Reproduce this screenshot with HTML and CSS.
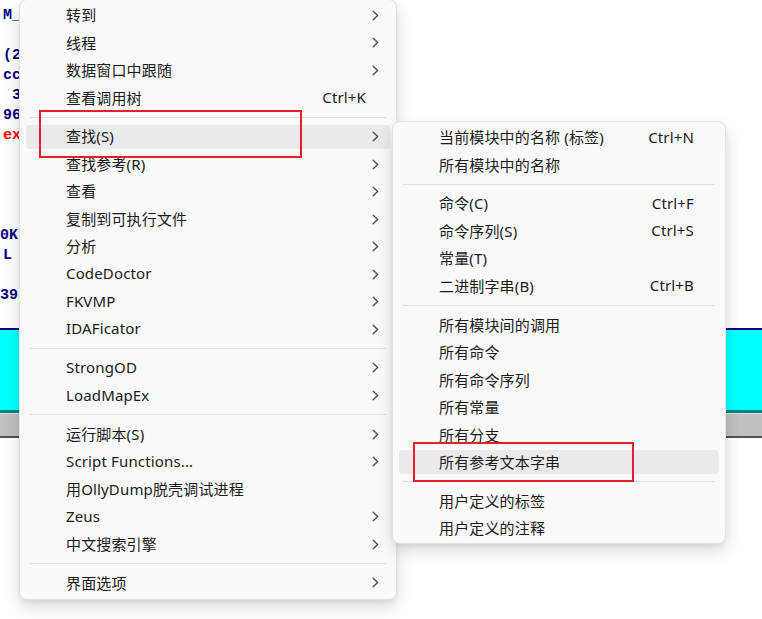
FILE: index.html
```html
<!DOCTYPE html>
<html lang="zh-CN">
<head>
<meta charset="utf-8">
<title>菜单</title>
<link rel="stylesheet" href="styles.css">
</head>
<body>
<div class="desk">
  <div class="code">
    <div class="ln">M_</div>
    <div class="ln"></div>
    <div class="ln">(2</div>
    <div class="ln">cc</div>
    <div class="ln">&nbsp;3</div>
    <div class="ln">96</div>
    <div class="ln red">ex</div>
    <div class="ln"></div>
    <div class="ln"></div>
    <div class="ln"></div>
    <div class="ln"></div>
    <div class="ln shift">0K</div>
    <div class="ln">L</div>
    <div class="ln"></div>
    <div class="ln shift">39</div>
  </div>
  <div class="band">
    <div class="cyan"></div>
    <div class="gray"></div>
  </div>
</div>

<div class="menu main">
  <div class="it"><div class="in"><span class="lb">转到</span><svg class="chev" viewBox="0 0 7 11"><path d="M1.2 1.2 L5.6 5.5 L1.2 9.8"/></svg></div></div>
  <div class="it"><div class="in"><span class="lb">线程</span><svg class="chev" viewBox="0 0 7 11"><path d="M1.2 1.2 L5.6 5.5 L1.2 9.8"/></svg></div></div>
  <div class="it"><div class="in"><span class="lb">数据窗口中跟随</span><svg class="chev" viewBox="0 0 7 11"><path d="M1.2 1.2 L5.6 5.5 L1.2 9.8"/></svg></div></div>
  <div class="it"><div class="in"><span class="lb">查看调用树</span><span class="sc">Ctrl+K</span></div></div>
  <div class="sep"></div>
  <div class="it"><div class="in hl"><span class="lb">查找(S)</span><svg class="chev" viewBox="0 0 7 11"><path d="M1.2 1.2 L5.6 5.5 L1.2 9.8"/></svg></div></div>
  <div class="it"><div class="in"><span class="lb">查找参考(R)</span><svg class="chev" viewBox="0 0 7 11"><path d="M1.2 1.2 L5.6 5.5 L1.2 9.8"/></svg></div></div>
  <div class="it"><div class="in"><span class="lb">查看</span><svg class="chev" viewBox="0 0 7 11"><path d="M1.2 1.2 L5.6 5.5 L1.2 9.8"/></svg></div></div>
  <div class="it"><div class="in"><span class="lb">复制到可执行文件</span><svg class="chev" viewBox="0 0 7 11"><path d="M1.2 1.2 L5.6 5.5 L1.2 9.8"/></svg></div></div>
  <div class="it"><div class="in"><span class="lb">分析</span><svg class="chev" viewBox="0 0 7 11"><path d="M1.2 1.2 L5.6 5.5 L1.2 9.8"/></svg></div></div>
  <div class="it"><div class="in"><span class="lb">CodeDoctor</span><svg class="chev" viewBox="0 0 7 11"><path d="M1.2 1.2 L5.6 5.5 L1.2 9.8"/></svg></div></div>
  <div class="it"><div class="in"><span class="lb">FKVMP</span><svg class="chev" viewBox="0 0 7 11"><path d="M1.2 1.2 L5.6 5.5 L1.2 9.8"/></svg></div></div>
  <div class="it"><div class="in"><span class="lb">IDAFicator</span><svg class="chev" viewBox="0 0 7 11"><path d="M1.2 1.2 L5.6 5.5 L1.2 9.8"/></svg></div></div>
  <div class="sep"></div>
  <div class="it"><div class="in"><span class="lb">StrongOD</span><svg class="chev" viewBox="0 0 7 11"><path d="M1.2 1.2 L5.6 5.5 L1.2 9.8"/></svg></div></div>
  <div class="it"><div class="in"><span class="lb">LoadMapEx</span><svg class="chev" viewBox="0 0 7 11"><path d="M1.2 1.2 L5.6 5.5 L1.2 9.8"/></svg></div></div>
  <div class="sep"></div>
  <div class="it"><div class="in"><span class="lb">运行脚本(S)</span><svg class="chev" viewBox="0 0 7 11"><path d="M1.2 1.2 L5.6 5.5 L1.2 9.8"/></svg></div></div>
  <div class="it"><div class="in"><span class="lb">Script Functions...</span><svg class="chev" viewBox="0 0 7 11"><path d="M1.2 1.2 L5.6 5.5 L1.2 9.8"/></svg></div></div>
  <div class="it"><div class="in"><span class="lb">用OllyDump脱壳调试进程</span></div></div>
  <div class="it"><div class="in"><span class="lb">Zeus</span><svg class="chev" viewBox="0 0 7 11"><path d="M1.2 1.2 L5.6 5.5 L1.2 9.8"/></svg></div></div>
  <div class="it"><div class="in"><span class="lb">中文搜索引擎</span><svg class="chev" viewBox="0 0 7 11"><path d="M1.2 1.2 L5.6 5.5 L1.2 9.8"/></svg></div></div>
  <div class="sep"></div>
  <div class="it"><div class="in"><span class="lb">界面选项</span><svg class="chev" viewBox="0 0 7 11"><path d="M1.2 1.2 L5.6 5.5 L1.2 9.8"/></svg></div></div>
</div>

<div class="menu sub">
  <div class="it"><div class="in"><span class="lb">当前模块中的名称 (标签)</span><span class="sc">Ctrl+N</span></div></div>
  <div class="it"><div class="in"><span class="lb">所有模块中的名称</span></div></div>
  <div class="sep"></div>
  <div class="it"><div class="in"><span class="lb">命令(C)</span><span class="sc">Ctrl+F</span></div></div>
  <div class="it"><div class="in"><span class="lb">命令序列(S)</span><span class="sc">Ctrl+S</span></div></div>
  <div class="it"><div class="in"><span class="lb">常量(T)</span></div></div>
  <div class="it"><div class="in"><span class="lb">二进制字串(B)</span><span class="sc">Ctrl+B</span></div></div>
  <div class="sep"></div>
  <div class="it"><div class="in"><span class="lb">所有模块间的调用</span></div></div>
  <div class="it"><div class="in"><span class="lb">所有命令</span></div></div>
  <div class="it"><div class="in"><span class="lb">所有命令序列</span></div></div>
  <div class="it"><div class="in"><span class="lb">所有常量</span></div></div>
  <div class="it"><div class="in"><span class="lb">所有分支</span></div></div>
  <div class="it"><div class="in hl"><span class="lb">所有参考文本字串</span></div></div>
  <div class="sep"></div>
  <div class="it"><div class="in"><span class="lb">用户定义的标签</span></div></div>
  <div class="it"><div class="in"><span class="lb">用户定义的注释</span></div></div>
</div>

<div class="mark mark-main"></div>
<div class="mark mark-sub"></div>
</body>
</html>
```

FILE: styles.css
```css
html, body {
  margin: 0;
  padding: 0;
  background: #ffffff;
}
body {
  width: 762px;
  height: 619px;
  overflow: hidden;
  position: relative;
  font-family: "Noto Sans", "Noto Sans CJK SC", sans-serif;
}

/* background debugger window */
.desk {
  display: flex;
  flex-direction: column;
}
.code {
  height: 328px;
  padding-top: 6px;
  box-sizing: border-box;
  font-family: "Liberation Mono", "DejaVu Sans Mono", monospace;
  font-weight: bold;
  font-size: 15px;
  color: #00007f;
}
.ln {
  height: 20px;
  line-height: 20px;
  padding-left: 3px;
  white-space: pre;
}
.ln.red { color: #ff0000; }
.ln.shift { padding-left: 0; }

.band {
  display: flex;
  flex-direction: column;
}
.cyan {
  height: 80px;
  background: #00ffff;
  border-top: 2px solid #000080;
  border-bottom: 3px solid #008080;
}
.gray {
  height: 22px;
  background: #c0c0c0;
  border-top: 1px solid #dedede;
  border-bottom: 2px solid #505050;
}

/* context menus */
.menu {
  position: absolute;
  box-sizing: border-box;
  background: #f9f9f9;
  border: 1px solid #e2e2e2;
  border-radius: 8px;
  padding: 2px 0;
  box-shadow: 0 8px 16px rgba(0, 0, 0, 0.14), 0 2px 4px rgba(0, 0, 0, 0.05);
  color: #1a1a1a;
  font-size: 15px;
  letter-spacing: 0.15px;
}
.main {
  left: 19px;
  top: -1.5px;
  width: 378px;
}
.sub {
  left: 392px;
  top: 121px;
  width: 334px;
  padding: 1.5px 0 1px;
}
.it {
  height: 27.5px;
  padding: 1.75px 6px;
  box-sizing: border-box;
}
.in {
  height: 100%;
  box-sizing: border-box;
  display: flex;
  align-items: center;
  border-radius: 4px;
  padding-left: 40px;
  padding-bottom: 1.5px;
}
.in.hl {
  background: #eaeaea;
}
.lb {
  flex: 1;
  white-space: nowrap;
}
.sc {
  margin-right: 24px;
  white-space: nowrap;
}
.sub .sc {
  margin-right: 25px;
}
.chev {
  width: 7px;
  height: 11px;
  margin-right: 11px;
  margin-top: 1.5px;
  fill: none;
  stroke: #4a4a4a;
  stroke-width: 1.3;
  stroke-linecap: round;
  stroke-linejoin: round;
}
.sep {
  height: 1px;
  background: #e0e0e0;
  margin: 5.125px 10px;
}

/* red annotation boxes */
.mark {
  position: absolute;
  box-sizing: border-box;
  border: 2px solid #e3202c;
}
.mark-main {
  left: 39px;
  top: 110px;
  width: 263px;
  height: 48px;
}
.mark-sub {
  left: 413px;
  top: 442px;
  width: 221px;
  height: 40px;
}
```
